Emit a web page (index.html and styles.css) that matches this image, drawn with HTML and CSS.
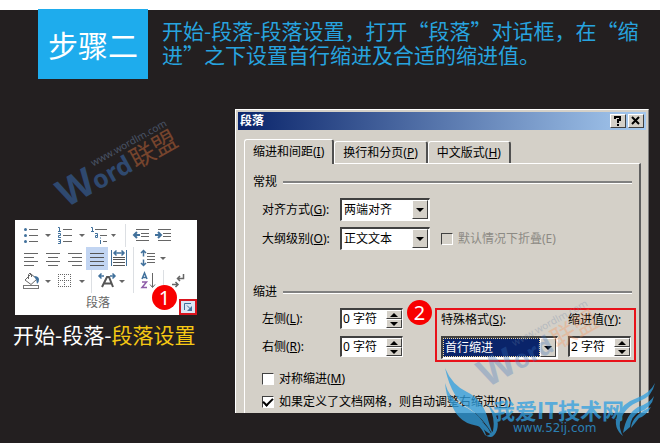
FILE: index.html
```
<!DOCTYPE html>
<html lang="zh-CN">
<head>
    <meta charset="UTF-8">
    <meta name="viewport" content="width=device-width, initial-scale=1.0">
    <title>步骤二</title>
    <link rel="stylesheet" href="styles.css">
</head>
<body>
    <div class="page">
        <header class="header">
            <div class="step">步骤二</div>
            <h1 class="headline">开始-段落-段落设置，打开“段落”对话框，在“缩<br>进”之下设置首行缩进及合适的缩进值。</h1>
        </header>

        <main class="main">
            <section class="left">
                <div class="ribbon">
                    <!-- 第一行 -->
                    <div class="tool-row">
                        <button class="tool split" aria-label="项目符号">
                            <svg width="34" height="23"><g fill="#41719c"><circle cx="5.5" cy="5.5" r="1.5"/><circle cx="5.5" cy="11.5" r="1.5"/><circle cx="5.5" cy="17.5" r="1.5"/></g><path d="M9 5.5h9M9 11.5h9M9 17.5h9" stroke="#666"/><path d="M25 10h6l-3 3z" fill="#666"/></svg>
                        </button>
                        <button class="tool split" aria-label="编号">
                            <svg width="34" height="23"><g stroke="#41719c" fill="none"><path d="M4 3.500h1.500V7M4 7.500h3M4 9.500h2.500v2h-2v2H7M4 15.500h2.500v4H4M4.500 17.500h2"/></g><path d="M9 5.5h9M9 11.5h9M9 17.5h9" stroke="#666"/><path d="M25 10h6l-3 3z" fill="#666"/></svg>
                        </button>
                        <button class="tool split" aria-label="多级列表">
                            <svg width="34" height="23"><g stroke="#41719c" fill="none"><path d="M3 3.5h1.5V7M3 7.5h3M7 9.5h2.5v4H7.5v-2h2M12.5 16v4M12.5 13.5v1"/></g><path d="M7 5.5h12M12 11.5h7M15 17.5h4" stroke="#666"/><path d="M23 10h5l-2.5 3z" fill="#666"/></svg>
                        </button>
                        <span class="divider"></span>
                        <button class="tool" aria-label="减少缩进量">
                            <svg width="22" height="23"><path d="M6 5.5h13M11 9.5h8M11 12.5h8M6 16.5h13" stroke="#666"/><path d="M4 11h6M7 8l-3 3 3 3" stroke="#41719c" stroke-width="2" fill="none"/></svg>
                        </button>
                        <button class="tool" aria-label="增加缩进量">
                            <svg width="22" height="23"><path d="M6 5.5h13M11 9.5h8M11 12.5h8M6 16.5h13" stroke="#666"/><path d="M3 11h6M6 8l3 3-3 3" stroke="#41719c" stroke-width="2" fill="none"/></svg>
                        </button>
                    </div>
                    <!-- 第二行 -->
                    <div class="tool-row">
                        <button class="tool" aria-label="左对齐">
                            <svg width="22" height="23"><path d="M4 6.5h14M4 10.5h10M4 14.5h14M4 18.5h10" stroke="#666"/></svg>
                        </button>
                        <button class="tool" aria-label="居中">
                            <svg width="22" height="23"><path d="M4 6.5h14M6 10.5h10M4 14.5h14M6 18.5h10" stroke="#666"/></svg>
                        </button>
                        <button class="tool" aria-label="右对齐">
                            <svg width="22" height="23"><path d="M4 6.5h14M8 10.5h10M4 14.5h14M8 18.5h10" stroke="#666"/></svg>
                        </button>
                        <button class="tool tool-on" aria-label="两端对齐">
                            <svg width="22" height="23"><path d="M4 6.5h14M4 10.5h14M4 14.5h14M4 18.5h14" stroke="#555"/></svg>
                        </button>
                        <button class="tool" aria-label="分散对齐">
                            <svg width="22" height="23"><path d="M3.5 3v16M18.5 3v16" stroke="#41719c"/><path d="M6 6h10M8.5 3.5L6 6l2.5 2.5M13.5 3.5L16 6l-2.5 2.5" stroke="#41719c" stroke-width="1.5" fill="none"/><path d="M5 10.5h12M5 12.5h12M5 15.5h12M5 18.5h12" stroke="#555"/></svg>
                        </button>
                        <span class="divider"></span>
                        <button class="tool split" aria-label="行距">
                            <svg width="34" height="23"><path d="M5.5 3.5v6M5.5 12.5v6M3 6l2.5-2.5L8 6M3 16l2.5 2.5L8 16" stroke="#41719c" stroke-width="1.5" fill="none"/><path d="M9 6.5h8M9 9.5h8M9 12.5h8M9 15.5h8" stroke="#666"/><path d="M22 10h6l-3 3z" fill="#666"/></svg>
                        </button>
                    </div>
                    <!-- 第三行 -->
                    <div class="tool-row">
                        <button class="tool split" aria-label="底纹">
                            <svg width="34" height="23"><rect x="3.5" y="15.5" width="15" height="3" fill="#fff" stroke="#777"/><path d="M5 10l6-6 6 5-6 5.5zM8.5 9V4.5q1.5-3 3 0V7" fill="none" stroke="#666"/><path d="M14 6q5 0 5 3.5T17 14q0-4-3-8z" fill="#41719c"/><path d="M25 10h6l-3 3z" fill="#666"/></svg>
                        </button>
                        <button class="tool split" aria-label="边框">
                            <svg width="34" height="23"><path d="M4 4.5h13M4 10.5h13M4.5 4v13M10.5 4v13M16.5 4v13M4 16.5h13" stroke="#666" stroke-dasharray="1 1"/><path d="M25 10h6l-3 3z" fill="#666"/></svg>
                        </button>
                        <span class="divider"></span>
                        <button class="tool split" aria-label="中文版式">
                            <svg width="34" height="23"><path d="M6 17l5-10h2l4 10M8 13.5h8" stroke="#555" stroke-width="2" fill="none"/><path d="M3 6h5M5.5 3.5L3 6l2.5 2.5M14 6h5M16.5 3.5L19 6l-2.5 2.5" stroke="#41719c" stroke-width="1.5" fill="none"/><path d="M23 10h6l-3 3z" fill="#666"/></svg>
                        </button>
                        <span class="divider"></span>
                        <button class="tool" aria-label="排序">
                            <svg width="22" height="23"><path d="M4 9l2.5-6L9 9M5 7.5h3" stroke="#41719c" stroke-width="1.5" fill="none"/><path d="M4 12h4.5L4 17.5h5" stroke="#8e5ca8" stroke-width="1.5" fill="none"/><path d="M14.5 3v14M12 14.5l2.5 3 2.5-3" stroke="#666" fill="none"/></svg>
                        </button>
                        <span class="divider"></span>
                        <button class="tool" aria-label="显示编辑标记">
                            <svg width="22" height="23"><path d="M15.500 4v4.500H10M12 6l-2.500 2.500L12 11M4 14.500h6M7.500 12l2.500 2.500L7.500 17" stroke="#666" stroke-width="1.5" fill="none"/></svg>
                        </button>
                    </div>
                    <div class="ribbon-label">段落</div>
                    <button class="launcher" aria-label="段落设置">
                        <svg width="14" height="12"><path d="M3.5 9V2.5H10M6 4.5l4 4" stroke="#41719c" fill="none"/><path d="M11 5v5H6z" fill="#41719c"/></svg>
                    </button>
                    <span class="badge badge-1">1</span>
                </div>
                <p class="caption">开始-段落-<span class="hl">段落设置</span></p>
            </section>

            <section class="dialog">
                <div class="titlebar">
                    <span class="title">段落</span>
                    <button class="title-btn" aria-label="帮助">
                        <svg width="14" height="12"><path d="M4 4V2h5v3H7v3" stroke="#000" stroke-width="2" fill="none"/><path d="M6 9h2v2H6z"/></svg>
                    </button>
                    <button class="title-btn" aria-label="关闭">
                        <svg width="14" height="12"><path d="M3 2l7 7M10 2l-7 7" stroke="#000" stroke-width="2"/></svg>
                    </button>
                </div>

                <div class="tabs">
                    <button class="tab tab-active">缩进和间距(<u>I</u>)</button>
                    <button class="tab">换行和分页(<u>P</u>)</button>
                    <button class="tab">中文版式(<u>H</u>)</button>
                </div>

                <div class="panel">
                    <div class="legend">常规</div>
                    <div class="rows general">
                        <div class="row">
                            <label for="align">对齐方式(<u>G</u>):</label>
                            <span class="sunken combo">
                                <select id="align"><option>两端对齐</option></select>
                                <span class="drop"></span>
                            </span>
                        </div>
                        <div class="row">
                            <label for="outline">大纲级别(<u>O</u>):</label>
                            <span class="sunken combo">
                                <select id="outline"><option>正文文本</option></select>
                                <span class="drop"></span>
                            </span>
                            <span class="check disabled">
                                <input type="checkbox" id="fold" disabled>
                                <label for="fold">默认情况下折叠(E)</label>
                            </span>
                        </div>
                    </div>

                    <div class="legend">缩进</div>
                    <div class="indent">
                        <div class="rows">
                            <div class="row">
                                <label for="leftIndent">左侧(<u>L</u>):</label>
                                <span class="sunken spin">
                                    <input type="text" id="leftIndent" value="0 字符">
                                    <span class="spin-btns"><button class="up" aria-label="增加"></button><button class="down" aria-label="减少"></button></span>
                                </span>
                            </div>
                            <div class="row">
                                <label for="rightIndent">右侧(<u>R</u>):</label>
                                <span class="sunken spin">
                                    <input type="text" id="rightIndent" value="0 字符">
                                    <span class="spin-btns"><button class="up" aria-label="增加"></button><button class="down" aria-label="减少"></button></span>
                                </span>
                            </div>
                        </div>
                        <div class="marked">
                            <div class="field">
                                <label for="special">特殊格式(<u>S</u>):</label>
                                <span class="sunken combo combo-focus">
                                    <select id="special"><option>首行缩进</option></select>
                                    <span class="drop"></span>
                                </span>
                            </div>
                            <div class="field">
                                <label for="by">缩进值(<u>Y</u>):</label>
                                <span class="sunken spin">
                                    <input type="text" id="by" value="2 字符">
                                    <span class="spin-btns"><button class="up" aria-label="增加"></button><button class="down" aria-label="减少"></button></span>
                                </span>
                            </div>
                            <span class="badge badge-2">2</span>
                        </div>
                    </div>
                    <div class="checks">
                        <span class="check">
                            <input type="checkbox" id="mirror">
                            <label for="mirror">对称缩进(<u>M</u>)</label>
                        </span>
                        <span class="check">
                            <input type="checkbox" id="grid" checked>
                            <label for="grid">如果定义了文档网格，则自动调整右缩进(<u>D</u>)</label>
                        </span>
                    </div>
                </div>
            </section>
        </main>

        <!-- 水印 -->
        <svg class="mark mark-1" width="150" height="100">
            <g transform="translate(24 88) rotate(-29)">
                <text class="mark-w" x="0" y="0">W</text>
                <text class="mark-ord" x="36" y="0">ord</text>
                <text class="mark-cn" x="80" y="0">联盟</text>
                <text class="mark-url" x="44" y="-23">www.wordlm.com</text>
            </g>
        </svg>
        <svg class="mark mark-2" width="150" height="100">
            <g transform="translate(24 88) rotate(-29)">
                <text class="mark-w" x="0" y="0">W</text>
                <text class="mark-ord" x="36" y="0">ord</text>
                <text class="mark-cn" x="80" y="0">联盟</text>
                <text class="mark-url" x="44" y="-23">www.wordlm.com</text>
            </g>
        </svg>
        <svg class="site" width="220" height="80">
            <g fill="#2f9fe0">
                <path d="M5 5Q12 22 27 29Q44 37 49 60L53 72Q43 55 30 46Q12 37 5 5z"/>
                <path d="M5 20Q9 35 21 42Q36 48 44 60Q30 56 20 51Q7 43 5 20z"/>
                <path d="M12 42Q20 52 32 54Q45 57 52 72Q44 68 41 63Q19 62 12 42z"/>
                <path d="M30 60Q42 56 46 72Q48 74 53 68Q56 52 46 40Q61 52 57 67Q53 78 45 72Q40 61 30 60z"/>
                <path d="M215 20Q212 34 200 38Q184 44 180 59Q179 66 183 73Q173 65 177 53Q182 40 197 35Q210 30 215 20z"/>
                <path d="M214 33Q212 45 199 49Q191 53 190 64L183 70Q186 51 198 44Q210 40 214 33z"/>
                <path d="M211 44Q206 53 199 55L191 65Q192 52 211 44z"/>
            </g>
            <text class="site-name" x="53" y="56">我爱IT技术网</text>
            <text class="site-url" x="73" y="69">www.52ij.com</text>
        </svg>
    </div>
</body>
</html>
```

FILE: styles.css
```
* {
    box-sizing: border-box;
}
body {
    margin: 0;
    background: #231f20;
    font-family: "Noto Sans", "Noto Sans CJK SC", sans-serif;
    font-size: 12px;
    line-height: 16px;
    color: #000;
}
button, input, select {
    font: inherit;
    color: inherit;
    margin: 0;
    padding: 0;
    border: 0;
    background: none;
}
.page {
    position: relative;
    min-height: 100vh;
    border-top: 10px solid #fff;
    background: #231f20;
}

/* 标题 */
.header {
    display: flex;
    gap: 14px;
    padding-left: 38px;
}
.step {
    width: 110px;
    height: 70px;
    margin-top: -1px;
    line-height: 70px;
    background: #1eaced;
    color: #fff;
    font-family: "Noto Sans CJK SC", sans-serif;
    font-size: 30px;
    text-align: center;
    flex-shrink: 0;
}
.headline {
    margin: 8px 0 0;
    font-family: "Noto Sans CJK SC", sans-serif;
    font-size: 21px;
    line-height: 24px;
    font-weight: normal;
    color: #27a3df;
    white-space: nowrap;
}
.main {
    display: flex;
    align-items: flex-start;
    gap: 38px;
    padding: 30px 11px 0 15px;
}

/* 功能区 */
.left {
    width: 182px;
    padding-top: 111px;
    flex-shrink: 0;
}
.ribbon {
    position: relative;
    background: #fff;
    padding-top: 4px;
}
.tool-row {
    display: flex;
    padding-left: 5px;
}
.tool {
    width: 22px;
    height: 23px;
    flex-shrink: 0;
}
.split {
    width: 34px;
}
.tool svg, .launcher svg, .title-btn svg {
    display: block;
}
.tool-on {
    background: #c2d5f2;
}
.divider {
    width: 1px;
    margin: 0 4px 0 3px;
    background: #dcdfe3;
}
.ribbon-label {
    padding-bottom: 2px;
    line-height: 20px;
    text-align: center;
    padding-right: 16px;
    color: #666;
}
.launcher {
    position: absolute;
    right: 0;
    bottom: 0;
    border: 2px solid #d9141e;
    background: #dce6f4;
}
.badge {
    position: absolute;
    width: 25px;
    height: 25px;
    border-radius: 50%;
    background: #f80000;
    color: #fff;
    font-size: 20px;
    line-height: 25px;
    text-align: center;
}
.badge-1 {
    right: 20px;
    bottom: 5px;
}
.badge-2 {
    left: -30px;
    top: -10px;
}
.caption {
    margin: 4px 0 0 -2px;
    font-family: "Noto Sans CJK SC", sans-serif;
    font-size: 21px;
    line-height: 30px;
    color: #fff;
    white-space: nowrap;
}
.hl {
    color: #f5c814;
}

/* 对话框 */
.dialog {
    flex: 1;
    min-width: 0;
    padding: 2px 2px 0;
    background: #d4d0c8;
    border: 1px solid #fff;
    border-right-color: #808080;
    border-bottom: 0;
}
.titlebar {
    display: flex;
    align-items: center;
    gap: 2px;
    height: 18px;
    padding: 0 2px;
    background: linear-gradient(to right, #0a246a, #a6caf0);
}
.title {
    flex: 1;
    color: #fff;
    font-weight: bold;
}
.title-btn {
    width: 16px;
    height: 14px;
    background: #d4d0c8;
    border: 1px solid #fff;
    border-right-color: #404040;
    border-bottom-color: #404040;
}
.tabs {
    display: flex;
    align-items: flex-end;
    margin: 9px 0 0 6px;
}
.tab {
    height: 22px;
    padding: 0 8px;
    border: 1px solid #fff;
    border-right: 2px solid #505050;
    border-bottom: 0;
    border-radius: 3px 3px 0 0;
    white-space: nowrap;
}
.tab-active {
    height: 25px;
    margin-bottom: -1px;
    padding-bottom: 1px;
    background: #d4d0c8;
    position: relative;
}
.panel {
    margin: 0 5px 0 6px;
    padding: 10px 7px 3px 8px;
    border: 1px solid #fff;
    border-right: 2px solid #606060;
    border-bottom: 0;
}
.legend {
    display: flex;
    align-items: center;
    gap: 6px;
}
.legend::after {
    content: "";
    flex: 1;
    height: 2px;
    background: #808080;
    border-bottom: 1px solid #fff;
}
.rows {
    display: flex;
    flex-direction: column;
    gap: 7px;
}
.general {
    gap: 6px;
    padding: 8px 0 34px 9px;
}
.row {
    display: flex;
    align-items: center;
}
.row > label {
    width: 78px;
    white-space: nowrap;
}
.sunken {
    display: flex;
    background: #fff;
    border: 1px solid #fff;
    border-top: 2px solid #404040;
    border-left: 2px solid #404040;
}
.combo {
    width: 90px;
    height: 23px;
    padding: 0 1px 1px 0;
}
.combo select {
    flex: 1;
    min-width: 0;
    padding-left: 2px;
    appearance: none;
    border-radius: 0;
}
.drop, .spin-btns button {
    display: flex;
    align-items: center;
    justify-content: center;
    background: #d4d0c8;
    border: 1px solid #fff;
    border-right-color: #404040;
    border-bottom-color: #404040;
}
.drop {
    width: 16px;
}
.drop::after, .down::after {
    content: "";
    border: 4px solid transparent;
    border-top-color: #000;
    border-bottom: 0;
}
.up::after {
    content: "";
    border: 4px solid transparent;
    border-bottom-color: #000;
    border-top: 0;
}
.spin {
    width: 63px;
    height: 21px;
}
.spin input {
    flex: 1;
    min-width: 0;
    padding-left: 1px;
}
.spin-btns {
    display: flex;
    flex-direction: column;
    width: 16px;
}
.spin-btns button {
    flex: 1;
}
.indent {
    display: flex;
    padding: 8px 0 0 9px;
}
.marked {
    position: relative;
    display: flex;
    gap: 10px;
    margin: 0 -4px 0 32px;
    padding: 2px 3px 1px 4px;
    border: 2px solid #e8121a;
}
.field {
    display: flex;
    flex-direction: column;
    gap: 8px;
    white-space: nowrap;
}
.combo-focus {
    width: 117px;
}
.combo-focus select {
    background: #0a246a;
    color: #fff;
    border: 1px dotted #f5db95;
    padding-left: 1px;
}
.checks {
    display: flex;
    flex-direction: column;
    gap: 7px;
    padding: 9px 0 0 9px;
}
.check {
    display: flex;
    align-items: center;
    gap: 5px;
    white-space: nowrap;
}
.check input {
    appearance: none;
    display: flex;
    align-items: center;
    justify-content: center;
    width: 12px;
    height: 12px;
    background: #fff;
    border: 1px solid #fff;
    border-top-color: #404040;
    border-left-color: #404040;
}
.check input:checked::after {
    content: "";
    width: 4px;
    height: 8px;
    margin-bottom: 2px;
    border: solid #000;
    border-width: 0 2px 2px 0;
    transform: rotate(45deg);
}
.disabled {
    margin-left: 11px;
    color: #8c8a84;
}
.disabled input {
    background: #d4d0c8;
}

/* 水印 */
.mark, .site {
    position: absolute;
    pointer-events: none;
}
.mark {
    overflow: visible;
}
.mark-1 {
    left: 42px;
    top: 110px;
    opacity: 0.5;
}
.mark-2 {
    left: 463px;
    top: 290px;
    opacity: 0.3;
}
.mark-w, .mark-ord {
    font-weight: bold;
    fill: #3b73bd;
}
.mark-w {
    font-size: 38px;
}
.mark-ord {
    font-size: 25px;
}
.mark-cn {
    font-size: 25px;
    fill: #c8693a;
}
.mark-2 .mark-cn {
    fill: #ff9050;
}
.mark-url {
    font-size: 10px;
    fill: #6f86a8;
}
.site {
    left: 440px;
    top: 353px;
    opacity: 0.75;
}
.site-name {
    font-family: "Noto Sans CJK SC", sans-serif;
    font-size: 22px;
    font-weight: bold;
    fill: #2f9fe0;
}
.site-url {
    font-family: "DejaVu Sans", sans-serif;
    font-size: 12px;
    fill: #2f9fe0;
}
```
